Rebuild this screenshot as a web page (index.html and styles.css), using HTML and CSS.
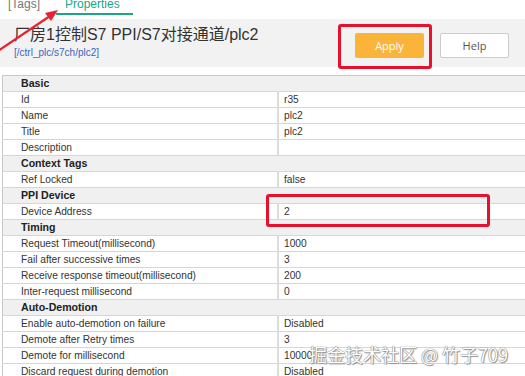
FILE: index.html
```html
<!DOCTYPE html>
<html lang="en">

<head>
    <meta charset="UTF-8">
    <meta name="viewport" content="width=device-width, initial-scale=1.0">
    <title>Properties</title>
    <link rel="stylesheet" href="styles.css">
</head>

<body>

    <div class="tabs">
        <span class="tab">[Tags]</span>
        <span class="tab active">Properties</span>
    </div>

    <div class="head">
        <div class="head-text">
            <h2>厂房1控制S7 PPI/S7对接通道/plc2</h2>
            <div class="path">[/ctrl_plc/s7ch/plc2]</div>
        </div>
        <div class="buttons">
            <button class="btn apply">Apply</button>
            <button class="btn help">Help</button>
        </div>
    </div>

    <table class="props">
        <tr class="group"><td colspan="2">Basic</td></tr>
        <tr><td class="key">Id</td><td>r35</td></tr>
        <tr><td class="key">Name</td><td>plc2</td></tr>
        <tr><td class="key">Title</td><td>plc2</td></tr>
        <tr><td class="key">Description</td><td></td></tr>
        <tr class="group"><td colspan="2">Context Tags</td></tr>
        <tr><td class="key">Ref Locked</td><td>false</td></tr>
        <tr class="group"><td colspan="2">PPI Device</td></tr>
        <tr><td class="key">Device Address</td><td>2</td></tr>
        <tr class="group"><td colspan="2">Timing</td></tr>
        <tr><td class="key">Request Timeout(millisecond)</td><td>1000</td></tr>
        <tr><td class="key">Fail after successive times</td><td>3</td></tr>
        <tr><td class="key">Receive response timeout(millisecond)</td><td>200</td></tr>
        <tr><td class="key">Inter-request millisecond</td><td>0</td></tr>
        <tr class="group"><td colspan="2">Auto-Demotion</td></tr>
        <tr><td class="key">Enable auto-demotion on failure</td><td>Disabled</td></tr>
        <tr><td class="key">Demote after Retry times</td><td>3</td></tr>
        <tr><td class="key">Demote for millisecond</td><td>10000</td></tr>
        <tr><td class="key">Discard request during demotion</td><td>Disabled</td></tr>
    </table>

    <!-- annotations drawn on top of the screenshot -->
    <svg class="arrow" width="70" height="60" viewBox="0 0 70 60">
        <line x1="-2" y1="51" x2="53" y2="14" stroke="#e8232f" stroke-width="2.2" />
        <polygon points="58,10 45,13 51,21" fill="#e8232f" />
    </svg>
    <div class="mark mark-apply"></div>
    <div class="mark mark-addr"></div>
    <div class="watermark">掘金技术社区 @ 竹子709</div>

</body>

</html>
```

FILE: styles.css
```css
body {
    font-family: "Liberation Sans", Arial, sans-serif;
    margin: 0;
    padding: 0;
    background-color: #fff;
    color: #333;
    overflow: hidden;
}

.tabs {
    height: 19px;
    overflow: hidden;
    display: flex;
}

.tab {
    font-size: 12px;
    line-height: 14px;
    margin-top: -3px;
    padding: 0 9px 2px;
    color: #777;
    border-bottom: 2px solid transparent;
    height: 14px;
}

.tab:first-child {
    padding-left: 8px;
    margin-right: 7px;
}

.tab.active {
    color: #1ba784;
    border-bottom-color: #1ba784;
    padding-right: 13px;
}

.head {
    background-color: #f2f2f2;
    height: 48px;
    display: flex;
    justify-content: space-between;
    padding: 0 16px 0 14px;
}

.head h2 {
    font-family: "Liberation Sans", "Noto Sans CJK SC", sans-serif;
    font-size: 16px;
    font-weight: normal;
    margin: 6px 0 0;
    line-height: 20px;
    color: #333;
}

.path {
    font-size: 10px;
    color: #3b63c4;
    margin-top: 2px;
}

.buttons {
    display: flex;
    gap: 16px;
    padding-top: 14px;
}

.btn {
    width: 69px;
    height: 25px;
    font-family: "Open Sans", sans-serif;
    font-size: 11px;
    border-radius: 2px;
    cursor: pointer;
}

.apply {
    background-color: #fbb43a;
    border: none;
    color: #fff;
}

.help {
    background-color: #fff;
    border: 1px solid #ccc;
    color: #555;
}

.props {
    margin-top: 8px;
    margin-left: 2px;
    width: 560px;
    border-collapse: collapse;
    border-top: 1px solid #c8c8c8;
    border-left: 1px solid #c8c8c8;
    font-size: 10.2px;
}

.props td {
    height: 15px;
    padding: 0 0 0 5px;
    border-bottom: 1px solid #d6d6d6;
    line-height: 15px;
}

.props td.key {
    width: 256px;
    padding-left: 18px;
    border-right: 2px solid #dcdcdc;
}

.props .group td {
    background-color: #f0f0f0;
    font-weight: bold;
    font-size: 10.6px;
    color: #222;
    padding-left: 18px;
}

.arrow {
    position: absolute;
    left: 0;
    top: 0;
}

.mark {
    position: absolute;
    border: 3px solid #e8112d;
    border-radius: 3px;
}

.mark-apply {
    left: 338px;
    top: 24px;
    width: 88px;
    height: 39px;
}

.mark-addr {
    left: 266px;
    top: 194px;
    width: 218px;
    height: 27px;
}

.watermark {
    position: absolute;
    left: 309px;
    top: 341px;
    font-family: "Noto Sans CJK SC", sans-serif;
    font-size: 18px;
    color: #fff;
    text-shadow: 0 0 1px #777, 0 0 1px #777, 1px 1px 1px #999;
    white-space: nowrap;
}
```
